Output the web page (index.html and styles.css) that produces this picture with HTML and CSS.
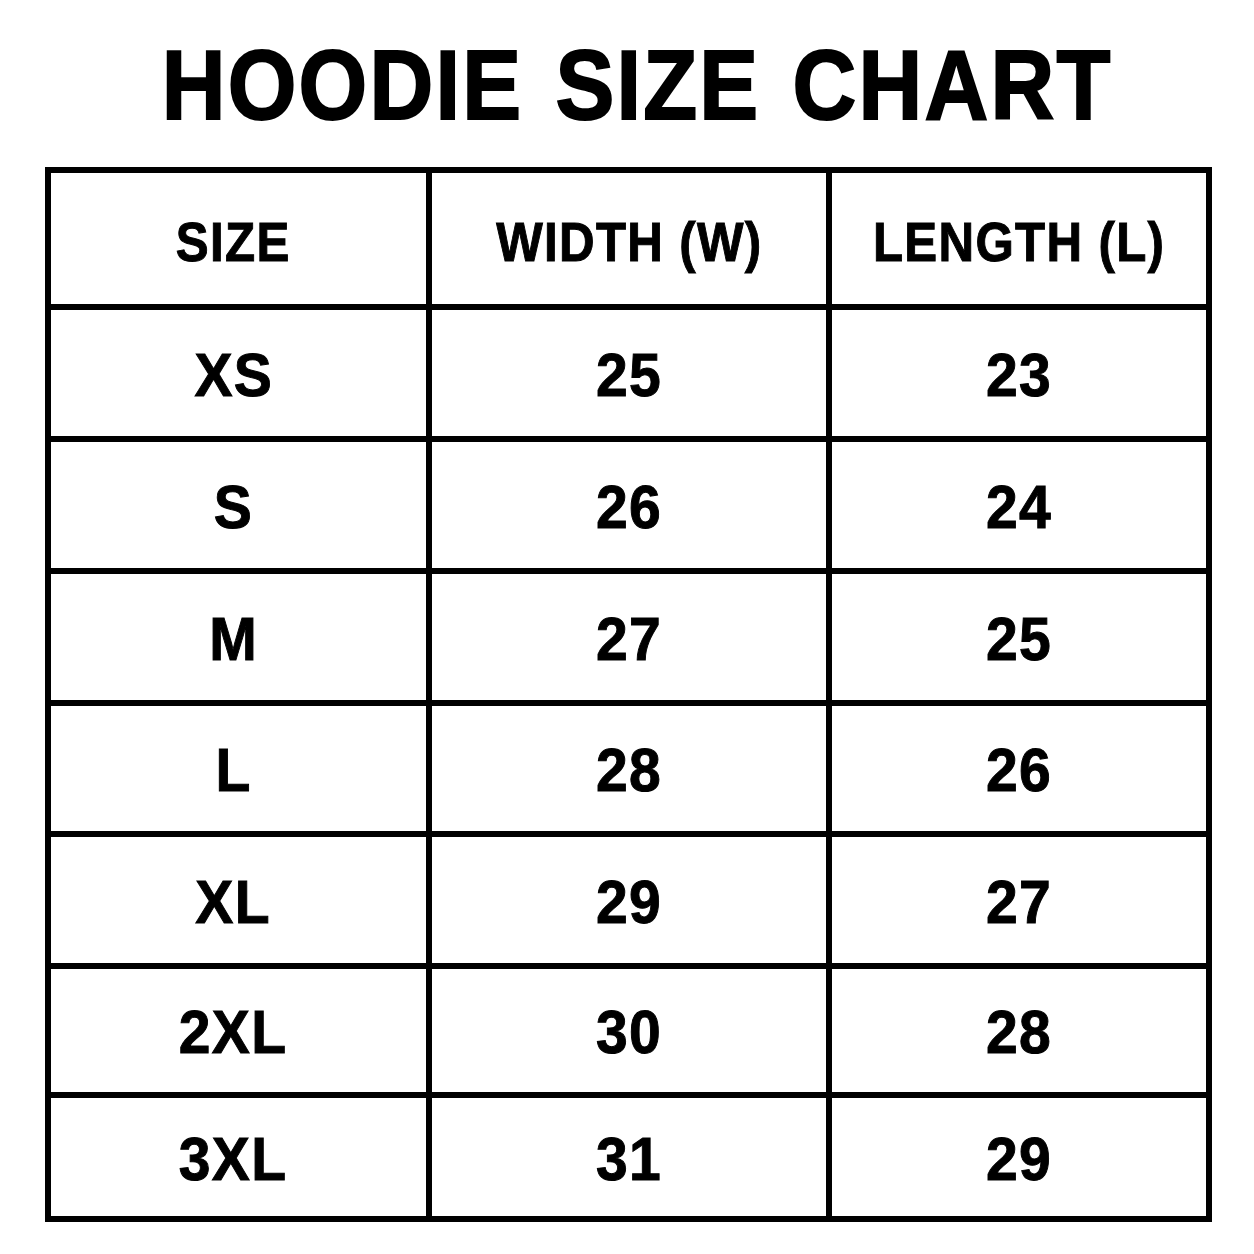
FILE: index.html
```html
<!DOCTYPE html>
<html lang="en">
<head>
<meta charset="utf-8">
<title>Hoodie Size Chart</title>
<link rel="stylesheet" href="styles.css">
</head>
<body>
<div class="page">
  <header class="heading"><h1 class="title">HOODIE SIZE CHART</h1></header>
  <div class="chart">
    <div class="cell head c1"><span>SIZE</span></div>
    <div class="cell head"><span>WIDTH (W)</span></div>
    <div class="cell head"><span>LENGTH (L)</span></div>

    <div class="cell c1"><span>XS</span></div>
    <div class="cell"><span>25</span></div>
    <div class="cell"><span>23</span></div>

    <div class="cell c1"><span>S</span></div>
    <div class="cell"><span>26</span></div>
    <div class="cell"><span>24</span></div>

    <div class="cell c1"><span>M</span></div>
    <div class="cell"><span>27</span></div>
    <div class="cell"><span>25</span></div>

    <div class="cell c1"><span>L</span></div>
    <div class="cell"><span>28</span></div>
    <div class="cell"><span>26</span></div>

    <div class="cell c1"><span>XL</span></div>
    <div class="cell"><span>29</span></div>
    <div class="cell"><span>27</span></div>

    <div class="cell c1"><span>2XL</span></div>
    <div class="cell"><span>30</span></div>
    <div class="cell"><span>28</span></div>

    <div class="cell c1"><span>3XL</span></div>
    <div class="cell"><span>31</span></div>
    <div class="cell"><span>29</span></div>
  </div>
</div>
</body>
</html>
```
FILE: styles.css
```css
html, body {
  margin: 0;
  padding: 0;
  background: #ffffff;
}
body {
  font-family: "Liberation Sans", Arial, Helvetica, sans-serif;
  color: #000000;
}
.page {
  width: 1254px;
  height: 1254px;
  padding-left: 45px;
  box-sizing: border-box;
}
.heading {
  height: 167px;
  display: flex;
  align-items: center;
  justify-content: center;
  padding-top: 2px;
  padding-right: 24px;
  box-sizing: border-box;
}
.title {
  margin: 0;
  font-size: 98px;
  line-height: 1;
  font-weight: 700;
  letter-spacing: 2.5px;
  word-spacing: 6px;
  transform: scaleX(0.9);
  -webkit-text-stroke: 2px #000000;
  white-space: nowrap;
}
.chart {
  width: 1167px;
  box-sizing: border-box;
  display: grid;
  grid-template-columns: 375px 394px 374px;
  grid-template-rows: 131px 126px 126px 126px 125px 126px 123px 118px;
  gap: 6px;
  padding: 6px;
  background: #000000;
}
.cell {
  background: #ffffff;
  display: flex;
  align-items: center;
  justify-content: center;
  padding-top: 3px;
  box-sizing: border-box;
  font-weight: 700;
  font-size: 62px;
  line-height: 1;
}
.cell span {
  display: inline-block;
  transform: scaleX(0.92);
  letter-spacing: 1.5px;
  -webkit-text-stroke: 1px #000000;
  white-space: nowrap;
}
.cell.head {
  font-size: 56px;
  padding-top: 7px;
}
.cell.head span {
  transform: scaleX(0.88);
}
.cell.c1 {
  padding-right: 10px;
}
```
